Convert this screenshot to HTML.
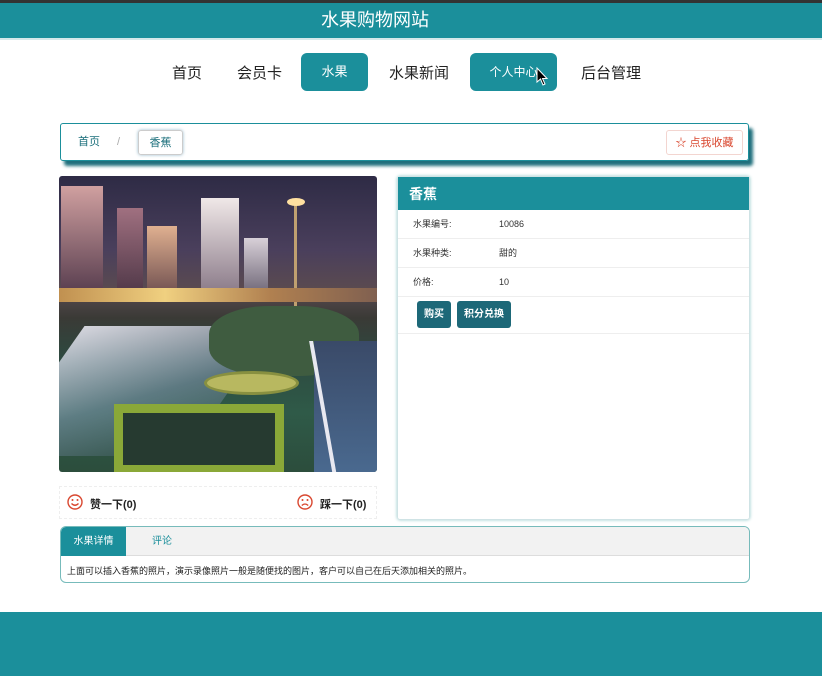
<!DOCTYPE html>
<html><head><meta charset="utf-8"><style>
*{margin:0;padding:0;box-sizing:border-box}
body{width:822px;height:681px;background:#fff;font-family:"Liberation Sans","Noto Sans CJK SC",sans-serif;position:relative;overflow:hidden;color:#333}
.abs{position:absolute}
.t{background:#1b8f9b}
</style></head><body>
<div class="abs" style="left:0;top:0;width:822px;height:3px;background:#333"></div>
<div class="abs t" style="left:0;top:3px;width:822px;height:35px;color:#fff;font-size:18px;text-align:center;line-height:34px;padding-right:72px">水果购物网站</div>
<div class="abs" style="left:0;top:38px;width:822px;height:2px;background:#d5e8ea"></div>
<div class="abs" style="left:172px;top:62px;font-size:15px;color:#222">首页</div>
<div class="abs" style="left:237px;top:62px;font-size:15px;color:#222">会员卡</div>
<div class="abs t" style="left:301px;top:53px;width:67px;height:38px;border-radius:6px;color:#fff;font-size:13px;text-align:center;line-height:38px">水果</div>
<div class="abs" style="left:389px;top:62px;font-size:15px;color:#222">水果新闻</div>
<div class="abs t" style="left:470px;top:53px;width:87px;height:38px;border-radius:6px;color:#fff;font-size:12px;text-align:center;line-height:38px">个人中心</div>
<svg class="abs" style="left:536px;top:67px" width="14" height="20" viewBox="0 0 14 20"><path d="M1 1 L1 15 L4.5 12 L7 18 L9 17 L6.5 11.5 L11 11.5 Z" fill="#000" stroke="#fff" stroke-width="1"/></svg>
<div class="abs" style="left:581px;top:62px;font-size:15px;color:#222">后台管理</div>

<div class="abs" style="left:60px;top:123px;width:689px;height:38px;border:1px solid #1b8f9b;border-radius:3px;box-shadow:4px 5px 3px #1f6f7c"></div>
<div class="abs" style="left:78px;top:135px;font-size:11px;line-height:14px;color:#1b6f7b">首页</div>
<div class="abs" style="left:117px;top:135px;font-size:11px;line-height:14px;color:#aaa">/</div>
<div class="abs" style="left:138px;top:130px;width:45px;height:25px;border:1px solid #ccc;border-radius:3px;box-shadow:0 0 3px #9bc;font-size:11px;color:#1b6f7b;text-align:center;line-height:25px">香蕉</div>
<div class="abs" style="left:666px;top:130px;width:77px;height:25px;border:1px solid #f3d5d0;border-radius:3px;font-size:11px;color:#d9472f;text-align:center;line-height:25px">☆ 点我收藏</div>

<div class="abs" style="left:59px;top:176px;width:318px;height:296px;border-radius:3px;overflow:hidden;background:linear-gradient(180deg,#2e2b45 0%,#4a3f5c 25%,#5a4a50 38%,#3a3a36 48%,#2d4a40 62%,#2f5a48 80%,#2c4d3c 100%)">
 <div class="abs" style="left:2px;top:10px;width:42px;height:105px;background:linear-gradient(#d0a0a0,#5a3f50)"></div>
 <div class="abs" style="left:58px;top:32px;width:26px;height:85px;background:linear-gradient(#a07080,#503848)"></div>
 <div class="abs" style="left:88px;top:50px;width:30px;height:68px;background:linear-gradient(#e0b090,#705050)"></div>
 <div class="abs" style="left:142px;top:22px;width:38px;height:95px;background:linear-gradient(#f0e8e8,#8a7a88)"></div>
 <div class="abs" style="left:185px;top:62px;width:24px;height:55px;background:linear-gradient(#d8d0d8,#706878)"></div>
 <div class="abs" style="left:235px;top:25px;width:3px;height:130px;background:#c0a070"></div>
 <div class="abs" style="left:228px;top:22px;width:18px;height:8px;border-radius:50%;background:#ffe0a0"></div>
 <div class="abs" style="left:0;top:112px;width:318px;height:14px;background:linear-gradient(90deg,#c09050,#f0d080,#b08050,#806050)"></div>
 <div class="abs" style="left:-20px;top:150px;width:190px;height:130px;background:linear-gradient(160deg,rgba(240,240,250,.85),rgba(140,160,190,.5) 55%,rgba(60,80,100,.2));transform:skewX(-35deg)"></div>
 <div class="abs" style="left:150px;top:130px;width:150px;height:70px;border-radius:40%;background:#3f5c40"></div>
 <div class="abs" style="left:145px;top:195px;width:95px;height:24px;border-radius:50%;background:#b8b860;border:3px solid #889040"></div>
 <div class="abs" style="left:55px;top:228px;width:170px;height:70px;background:#263a30;border:9px solid #8aa838"></div>
 <div class="abs" style="left:255px;top:165px;width:70px;height:135px;background:linear-gradient(#3a4a68,#4a6a90)"></div>
 <div class="abs" style="left:262px;top:165px;width:4px;height:135px;background:#e8e8f0;transform:skewX(10deg)"></div>
</div>
<div class="abs" style="left:59px;top:486px;width:318px;height:33px;border:1px dashed #eee"></div>
<svg class="abs" style="left:67px;top:494px" width="16" height="16" viewBox="0 0 16 16"><circle cx="8" cy="8" r="7" fill="none" stroke="#d9472f" stroke-width="1.4"/><circle cx="5.5" cy="6" r="1" fill="#d9472f"/><circle cx="10.5" cy="6" r="1" fill="#d9472f"/><path d="M4.5 9.5 Q8 13 11.5 9.5" fill="none" stroke="#d9472f" stroke-width="1.3"/></svg>
<div class="abs" style="left:90px;top:496px;font-size:11px;font-weight:bold;color:#222">赞一下(0)</div>
<svg class="abs" style="left:297px;top:494px" width="16" height="16" viewBox="0 0 16 16"><circle cx="8" cy="8" r="7" fill="none" stroke="#d9472f" stroke-width="1.4"/><circle cx="5.5" cy="6" r="1" fill="#d9472f"/><circle cx="10.5" cy="6" r="1" fill="#d9472f"/><path d="M4.8 11.5 Q8 8.5 11.2 11.5" fill="none" stroke="#d9472f" stroke-width="1.3"/></svg>
<div class="abs" style="left:320px;top:496px;font-size:11px;font-weight:bold;color:#222">踩一下(0)</div>

<div class="abs" style="left:397px;top:176px;width:353px;height:344px;border:1px solid #cfe3e5;box-shadow:0 0 3px #9cc;border-radius:3px">
 <div class="t" style="height:33px;color:#fff;font-weight:bold;font-size:14px;line-height:35px;padding-left:11px">香蕉</div>
 <div style="height:29px;border-bottom:1px solid #eee;font-size:9px;line-height:29px;position:relative"><span class="abs" style="left:15px">水果编号:</span><span class="abs" style="left:101px">10086</span></div>
 <div style="height:29px;border-bottom:1px solid #eee;font-size:9px;line-height:29px;position:relative"><span class="abs" style="left:15px">水果种类:</span><span class="abs" style="left:101px">甜的</span></div>
 <div style="height:29px;border-bottom:1px solid #eee;font-size:9px;line-height:29px;position:relative"><span class="abs" style="left:15px">价格:</span><span class="abs" style="left:101px">10</span></div>
 <div style="height:37px;border-bottom:1px solid #eee;position:relative">
  <div class="abs" style="left:19px;top:4px;width:34px;height:27px;background:#1d6878;border-radius:3px;color:#fff;font-size:10px;font-weight:bold;text-align:center;line-height:27px">购买</div>
  <div class="abs" style="left:59px;top:4px;width:54px;height:27px;background:#1d6878;border-radius:3px;color:#fff;font-size:10px;font-weight:bold;text-align:center;line-height:27px">积分兑换</div>
 </div>
</div>

<div class="abs" style="left:60px;top:526px;width:690px;height:57px;border:1px solid #7bb;border-radius:6px;overflow:hidden">
 <div style="height:29px;background:#f2f2f2;border-bottom:1px solid #ddd;position:relative">
  <div class="abs t" style="left:0;top:0;width:65px;height:29px;color:#fff;font-size:10px;text-align:center;line-height:29px">水果详情</div>
  <div class="abs" style="left:91px;top:0;font-size:10px;color:#1b8f9b;line-height:29px">评论</div>
 </div>
 <div style="font-size:9px;color:#222;padding:8px 6px">上面可以插入香蕉的照片，演示录像照片一般是随便找的图片，客户可以自己在后天添加相关的照片。</div>
</div>

<div class="abs t" style="left:0;top:612px;width:822px;height:64px"></div>
</body></html>
